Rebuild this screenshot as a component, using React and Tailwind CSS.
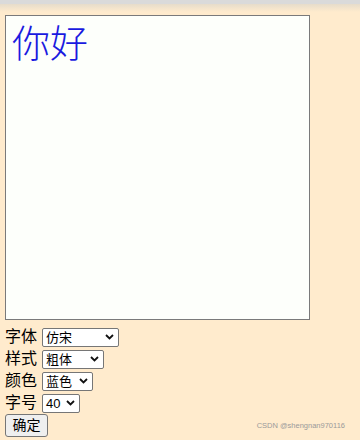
import React from "react";

const font = { fontFamily: '"Liberation Sans", "Noto Sans CJK SC", sans-serif' };

function Chevron() {
  return (
    <svg width="9" height="6" viewBox="0 0 9 6" className="shrink-0">
      <path d="M1 1 L4.5 4.5 L8 1" fill="none" stroke="#111" strokeWidth="1.8" />
    </svg>
  );
}

function Select({ value, width }) {
  return (
    <div
      className="h-[19px] flex items-center justify-between bg-white border border-[#767676] rounded-[2px] pl-[3px] pr-[4px] text-[13px] leading-none text-black"
      style={{ width }}
    >
      <span>{value}</span>
      <Chevron />
    </div>
  );
}

function Row({ label, value, width }) {
  return (
    <div className="flex items-center h-[22px] gap-[5px]">
      <span className="text-[16px] leading-none text-black">{label}</span>
      <Select value={value} width={width} />
    </div>
  );
}

export default function App() {
  return (
    <div className="w-[360px] h-[440px] bg-[#ffebcd] relative overflow-hidden" style={font}>
      <div className="h-[4px] bg-[#dadada]" />
      <div className="h-[8px] bg-gradient-to-b from-[#e6dccb] to-[#ffebcd]" />
      <div className="pl-[5px] pt-[3px]">
        <div className="w-[305px] h-[305px] bg-[#fdfffb] border border-[#7a7a7a] pl-[6px] pt-[2px]">
          <span
            className="text-[38px] leading-[46px] text-[#1a1ae0]"
            style={{ fontFamily: '"Noto Sans CJK SC", sans-serif', fontWeight: 300 }}
          >
            你好
          </span>
        </div>
        <div className="pt-[6px] flex flex-col">
          <Row label="字体" value="仿宋" width={77} />
          <Row label="样式" value="粗体" width={62} />
          <Row label="颜色" value="蓝色" width={51} />
          <Row label="字号" value="40" width={38} />
          <div className="h-[23px] w-[43px] flex items-center justify-center bg-[#efefef] border border-[#767676] rounded-[3px] text-[14px] text-black">
            确定
          </div>
        </div>
      </div>
      <div className="absolute right-[15px] bottom-[9px] text-[7.5px] text-[#9a9a9a]">
        CSDN @shengnan970116
      </div>
    </div>
  );
}
